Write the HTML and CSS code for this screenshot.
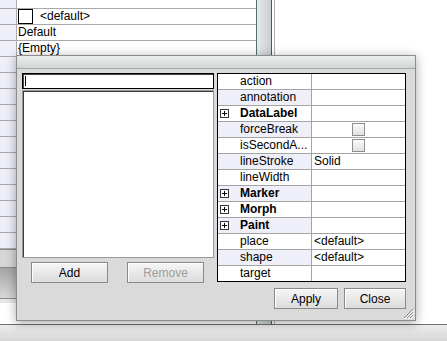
FILE: index.html
```html
<!DOCTYPE html>
<html lang="en">
<head>
  <meta charset="UTF-8" />
  <title>Properties</title>
  <link rel="stylesheet" href="styles.css">
</head>
<body>
  <!-- window behind the dialog -->
  <div class="desk">
    <div class="sheet">
      <div class="row top"><span class="key"></span><span class="val"></span></div>
      <div class="row"><span class="key"></span><span class="val"><span class="box"></span>&lt;default&gt;</span></div>
      <div class="row"><span class="key"></span><span class="val">Default</span></div>
      <div class="row"><span class="key"></span><span class="val">{Empty}</span></div>
      <div class="row"><span class="key"></span><span class="val"></span></div>
      <div class="row"><span class="key"></span><span class="val"></span></div>
      <div class="row"><span class="key"></span><span class="val"></span></div>
      <div class="row"><span class="key"></span><span class="val"></span></div>
      <div class="row"><span class="key"></span><span class="val"></span></div>
      <div class="row"><span class="key"></span><span class="val"></span></div>
      <div class="row"><span class="key"></span><span class="val"></span></div>
      <div class="row"><span class="key"></span><span class="val"></span></div>
      <div class="row"><span class="key"></span><span class="val"></span></div>
      <div class="row"><span class="key"></span><span class="val"></span></div>
      <div class="row"><span class="key"></span><span class="val"></span></div>
      <div class="row"><span class="key"></span><span class="val"></span></div>
      <div class="sheet-foot">
        <div class="foot-gray"></div>
        <div class="foot-bar"></div>
        <div class="foot-white"></div>
      </div>
    </div>
    <div class="scroll"></div>
    <div class="blank"></div>
  </div>
  <div class="status"></div>

  <!-- properties dialog -->
  <div class="dialog">
    <div class="titlebar"></div>
    <div class="dlg-body">
      <div class="left">
        <div class="field"><span class="caret"></span></div>
        <div class="list"></div>
        <div class="left-btns">
          <button class="btn">Add</button>
          <button class="btn off">Remove</button>
        </div>
      </div>
      <div class="right">
        <div class="props">
          <div class="prow"><div class="pname">action</div><div class="pval"></div></div>
          <div class="prow alt"><div class="pname">annotation</div><div class="pval"></div></div>
          <div class="prow"><div class="pname grp"><span class="tog"><svg width="9" height="9" viewBox="0 0 9 9"><rect x="0.5" y="0.5" width="8" height="8" fill="#fff" stroke="#333"/><path d="M2 4.5h5M4.5 2v5" stroke="#000"/></svg></span>DataLabel</div><div class="pval"></div></div>
          <div class="prow alt"><div class="pname">forceBreak</div><div class="pval mid"><span class="chk"></span></div></div>
          <div class="prow"><div class="pname">isSecondA...</div><div class="pval mid"><span class="chk"></span></div></div>
          <div class="prow alt"><div class="pname">lineStroke</div><div class="pval">Solid</div></div>
          <div class="prow"><div class="pname">lineWidth</div><div class="pval"></div></div>
          <div class="prow alt"><div class="pname grp"><span class="tog"><svg width="9" height="9" viewBox="0 0 9 9"><rect x="0.5" y="0.5" width="8" height="8" fill="#fff" stroke="#333"/><path d="M2 4.5h5M4.5 2v5" stroke="#000"/></svg></span>Marker</div><div class="pval"></div></div>
          <div class="prow"><div class="pname grp"><span class="tog"><svg width="9" height="9" viewBox="0 0 9 9"><rect x="0.5" y="0.5" width="8" height="8" fill="#fff" stroke="#333"/><path d="M2 4.5h5M4.5 2v5" stroke="#000"/></svg></span>Morph</div><div class="pval"></div></div>
          <div class="prow alt"><div class="pname grp"><span class="tog"><svg width="9" height="9" viewBox="0 0 9 9"><rect x="0.5" y="0.5" width="8" height="8" fill="#fff" stroke="#333"/><path d="M2 4.5h5M4.5 2v5" stroke="#000"/></svg></span>Paint</div><div class="pval"></div></div>
          <div class="prow"><div class="pname">place</div><div class="pval">&lt;default&gt;</div></div>
          <div class="prow alt"><div class="pname">shape</div><div class="pval">&lt;default&gt;</div></div>
          <div class="prow last"><div class="pname">target</div><div class="pval"></div></div>
        </div>
        <div class="right-btns">
          <button class="btn apply">Apply</button>
          <button class="btn close">Close</button>
        </div>
      </div>
    </div>
    <svg class="grip" width="12" height="12" viewBox="0 0 12 12">
      <path d="M11 2L2 11M11 5L5 11M11 8L8 11" stroke="#8a8a8a"/>
      <path d="M12 3L3 12M12 6L6 12M12 9L9 12" stroke="#fff"/>
    </svg>
  </div>
</body>
</html>
```

FILE: styles.css
```css
body {
  margin: 0;
  width: 447px;
  height: 341px;
  overflow: hidden;
  font-family: "Liberation Sans", Arial, sans-serif;
  font-size: 12px;
  color: #000;
  background: #fff;
  position: relative;
}

/* окно на заднем плане */
.desk {
  display: flex;
  height: 324px;
}

.sheet {
  width: 256px;
  display: flex;
  flex-direction: column;
  background: #fff;
}

.row {
  display: flex;
  height: 15px;
  line-height: 15px;
  border-bottom: 1px solid #a9a9a9;
}

.row.top {
  height: 8px;
}

.key {
  width: 16px;
  flex: none;
  background: #efeff9;
  border-right: 1px solid #a9a9a9;
}

.val {
  display: flex;
  align-items: center;
  gap: 7px;
  padding-left: 1px;
  white-space: nowrap;
}

.box {
  width: 13px;
  height: 13px;
  border: 1px solid #000;
  background: #fff;
}

.sheet-foot {
  flex: 1;
  display: flex;
  flex-direction: column;
  border-top: 1px solid #8a8a8a;
}

.foot-gray {
  height: 17px;
  background: #d6d6d6;
  border-bottom: 1px solid #8a8a8a;
}

.foot-bar {
  height: 30px;
  background: linear-gradient(to bottom, #a4a4a4, #d8d8d8);
  border-bottom: 1px solid #8a8a8a;
}

.foot-white {
  flex: 1;
  background: #fff;
  border-top: 4px solid #e6e6e6;
  border-top-width: 4px;
}

.scroll {
  width: 14px;
  border-left: 1px solid #52706f;
  border-right: 1px solid #4d5858;
  background: linear-gradient(to right, #e6eaea, #c8cfcf);
}

.blank {
  flex: 1;
  border-left: 1px solid #fff;
  box-shadow: inset 1px 0 0 #fff, inset 2px 0 0 #b0b0b0;
  background: #fff;
}

.status {
  height: 16px;
  border-top: 1px solid #6e6e6e;
  background: linear-gradient(to bottom, #ececec, #d6d6d6);
}

/* диалог */
.dialog {
  position: absolute;
  left: 16px;
  top: 55px;
  width: 398px;
  height: 264px;
  border: 1px solid #8c8c8c;
  background: #dadada;
  box-shadow: 0 2px 10px rgba(0, 0, 0, 0.35);
}

.titlebar {
  height: 12px;
  border-bottom: 1px solid #a4a8a8;
  background: linear-gradient(to bottom, #eceeee, #d2d6d6);
}

.dlg-body {
  display: flex;
  gap: 3px;
  padding: 4px 9px 0 5px;
}

.left {
  width: 192px;
  display: flex;
  flex-direction: column;
}

.field {
  height: 14px;
  border: 1px solid #000;
  box-shadow: inset 1px 1px 0 #444;
  background: #fff;
  position: relative;
}

.caret {
  position: absolute;
  left: 2px;
  top: 2px;
  width: 1px;
  height: 10px;
  background: #000;
}

.list {
  margin-top: 1px;
  height: 166px;
  border: 1px solid #9a9a9a;
  box-shadow: inset 1px 1px 0 #3a3a3a;
  background: #fff;
}

.left-btns {
  display: flex;
  justify-content: space-between;
  margin-top: 4px;
  padding: 0 10px 0 9px;
}

.btn {
  height: 21px;
  width: 77px;
  padding: 0;
  border: 1px solid #8a8a8a;
  box-shadow: inset 1px 1px 0 #fff;
  background: linear-gradient(to bottom, #f6f6f6, #dcdcdc);
  font-family: "Liberation Sans", Arial, sans-serif;
  font-size: 12px;
  color: #000;
}

.btn.off {
  color: #9c9c9c;
}

.right {
  width: 189px;
  display: flex;
  flex-direction: column;
}

.props {
  border: 1px solid #000;
  background: #fff;
}

.prow {
  display: flex;
  height: 15px;
  line-height: 15px;
  border-bottom: 1px solid #a4a4a4;
}

.prow.last {
  border-bottom: none;
}

.pname {
  width: 71px;
  flex: none;
  padding-left: 22px;
  border-right: 1px solid #a4a4a4;
  white-space: nowrap;
  overflow: hidden;
}

.prow.alt .pname {
  background: #efeff9;
}

.pname.grp {
  font-weight: bold;
}

.tog {
  display: inline-block;
  width: 21px;
  margin-left: -21px;
  padding-left: 1px;
  box-sizing: border-box;
  vertical-align: -1px;
}

.tog svg {
  display: block;
}

.pval {
  flex: 1;
  padding-left: 2px;
  white-space: nowrap;
}

.pval.mid {
  display: flex;
  justify-content: center;
  align-items: center;
  padding-left: 0;
}

.chk {
  width: 11px;
  height: 11px;
  border: 1px solid #8e8e8e;
  background: linear-gradient(to bottom, #fafafa, #e2e2e2);
}

.right-btns {
  display: flex;
  justify-content: flex-end;
  gap: 6px;
  margin-top: 6px;
}

.btn.apply {
  width: 64px;
}

.btn.close {
  width: 62px;
}

.grip {
  position: absolute;
  right: 1px;
  bottom: 1px;
}
```
